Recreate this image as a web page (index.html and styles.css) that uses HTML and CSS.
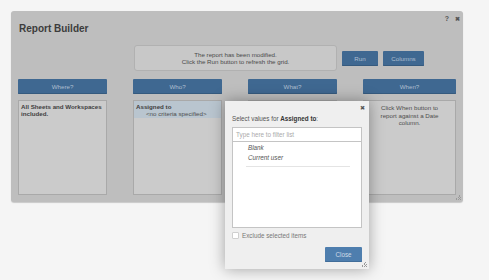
FILE: index.html
```html
<!DOCTYPE html>
<html>
<head>
<meta charset="utf-8">
<link rel="stylesheet" href="styles.css">
</head>
<body>
<div class="dialog">
  <div class="header">
    <div class="title">Report Builder</div>
    <div class="winctl"><span class="help">?</span><span class="x">&#x2716;</span></div>
  </div>
  <div class="toolbar">
    <div class="msg">The report has been modified.<br>Click the Run button to refresh the grid.</div>
    <button class="btn run">Run</button>
    <button class="btn cols">Columns</button>
  </div>
  <div class="grid">
    <button class="btn head">Where?</button>
    <button class="btn head">Who?</button>
    <button class="btn head">What?</button>
    <button class="btn head">When?</button>
    <div class="box where"><b>All Sheets and Workspaces included.</b></div>
    <div class="box who">
      <div class="crit"><b>Assigned to</b><div class="none">&lt;no criteria specified&gt;</div></div>
    </div>
    <div class="box what"></div>
    <div class="box when">Click When button to report against a Date column.</div>
  </div>
  <span class="grip main-grip"></span>
  <div class="popup">
    <div class="pop-close"><span>&#x2716;</span></div>
    <div class="pop-label">Select values for <b>Assigned to</b>:</div>
    <div class="filter">Type here to filter list</div>
    <div class="list">
      <div class="items">
        <div class="item">Blank</div>
        <div class="item">Current user</div>
      </div>
    </div>
    <label class="excl"><span class="cb"></span>Exclude selected items</label>
    <div class="pop-foot"><button class="close-btn">Close</button></div>
    <span class="grip pop-grip"></span>
  </div>
</div>
</body>
</html>
```

FILE: styles.css
```css
html, body { margin: 0; padding: 0; }
body {
  background: #f5f5f5;
  width: 489px;
  height: 280px;
  overflow: hidden;
  font-family: "Liberation Sans", Arial, sans-serif;
  font-size: 6.2px;
  color: #444;
}
.dialog {
  position: relative;
  margin: 11px 0 0 11px;
  width: 452px;
  height: 191px;
  box-sizing: border-box;
  padding: 12px 7px 7px 7px;
  background: #bebebe;
  border-radius: 3px;
  box-shadow: 0 1px 1px rgba(0,0,0,0.18);
  display: flex;
  flex-direction: column;
}
.header {
  display: flex;
  justify-content: space-between;
  height: 12px;
}
.title {
  font-size: 10px;
  line-height: 12px;
  font-weight: bold;
  color: #3c3c3c;
  padding-left: 1px;
}
.winctl {
  margin-top: -8px;
  margin-right: -4px;
  display: flex;
  gap: 6px;
  font-size: 7px;
  line-height: 8px;
  font-weight: bold;
  color: #555;
}
.winctl .x { font-size: 6px; }
.toolbar {
  margin-top: 10px;
  height: 26px;
  display: flex;
  align-items: center;
  padding-left: 116px;
}
.msg {
  width: 203px;
  height: 26px;
  box-sizing: border-box;
  border: 1px solid #b1b1b1;
  border-radius: 3px;
  background: #c8c8c8;
  display: flex;
  align-items: center;
  justify-content: center;
  text-align: center;
  line-height: 7px;
  color: #4a4a4a;
}
.btn {
  font-family: "Liberation Sans", Arial, sans-serif;
  font-size: 6.2px;
  border: 0;
  padding: 0;
  margin: 0;
  background: #3f6891;
  color: #aebfd0;
  height: 15px;
  border-radius: 1px;
  box-shadow: inset 0 -1px 0 #355a7e;
}
.run { width: 36px; margin-left: 5px; }
.cols { width: 41px; margin-left: 5px; }
.grid {
  margin-top: 8px;
  display: grid;
  grid-template-columns: 89px 89px 89px 93px;
  grid-template-rows: 15px 95px;
  column-gap: 26px;
  row-gap: 6px;
}
.head { width: 100%; }
.box {
  box-sizing: border-box;
  border: 1px solid #a9a9a9;
  background: #cbcbcb;
  line-height: 7px;
}
.where { padding: 2px 2px; color: #3e3e3e; }
.who .crit {
  background: #b9c5cf;
  height: 17px;
  box-sizing: border-box;
  padding: 2px 2px 0 2px;
  color: #3e3e3e;
}
.who .none { padding-left: 10px; color: #4e4e4e; font-weight: normal; }
.when {
  padding: 3px 14px 0 14px;
  text-align: center;
  line-height: 7.6px;
  color: #4e4e4e;
}
.grip {
  position: absolute;
  width: 5px;
  height: 5px;
  background: linear-gradient(135deg, transparent 0 40%, #9a9a9a 40% 50%, transparent 50% 65%, #9a9a9a 65% 75%, transparent 75% 88%, #9a9a9a 88%);
}
.main-grip { right: 2px; bottom: 2px; }
.popup {
  position: absolute;
  left: 214px;
  top: 90px;
  width: 144px;
  height: 168px;
  box-sizing: border-box;
  padding: 3px 7px 7px 7px;
  background: #efefef;
  box-shadow: 0 0 14px rgba(0,0,0,0.35);
  display: flex;
  flex-direction: column;
  font-size: 6.3px;
  color: #555;
}
.pop-close {
  height: 8px;
  display: flex;
  justify-content: flex-end;
  margin-right: -3px;
  font-size: 6px;
  line-height: 8px;
  color: #555;
}
.pop-label {
  margin-top: 3px;
  line-height: 7px;
  color: #555;
}
.pop-label b { color: #333; }
.filter {
  margin-top: 5px;
  height: 15px;
  box-sizing: border-box;
  border: 1px solid #c4c4c4;
  background: #fff;
  color: #aaa;
  line-height: 13px;
  padding-left: 3px;
}
.list {
  height: 86px;
  box-sizing: border-box;
  border: 1px solid #c4c4c4;
  border-top: 0;
  background: #fff;
}
.items {
  margin: 0 11px 0 13px;
  padding-top: 1px;
  padding-bottom: 3px;
  border-bottom: 1px solid #e4e4e4;
}
.item {
  line-height: 10px;
  padding-left: 2px;
  font-style: italic;
  color: #555;
}
.excl {
  margin-top: 4px;
  height: 7px;
  display: flex;
  align-items: center;
  gap: 3px;
  color: #777;
}
.cb {
  width: 5px;
  height: 5px;
  border: 1px solid #cfcfcf;
  background: #fff;
  border-radius: 1px;
}
.pop-foot {
  margin-top: 8px;
  display: flex;
  justify-content: flex-end;
}
.close-btn {
  width: 37px;
  height: 15px;
  border: 0;
  padding: 0;
  background: #4e7eae;
  color: #cfdbe7;
  font-family: "Liberation Sans", Arial, sans-serif;
  font-size: 6.3px;
  border-radius: 1px;
  box-shadow: inset 0 -1px 0 #416d99;
}
.pop-grip { right: 2px; bottom: 2px; }
```
